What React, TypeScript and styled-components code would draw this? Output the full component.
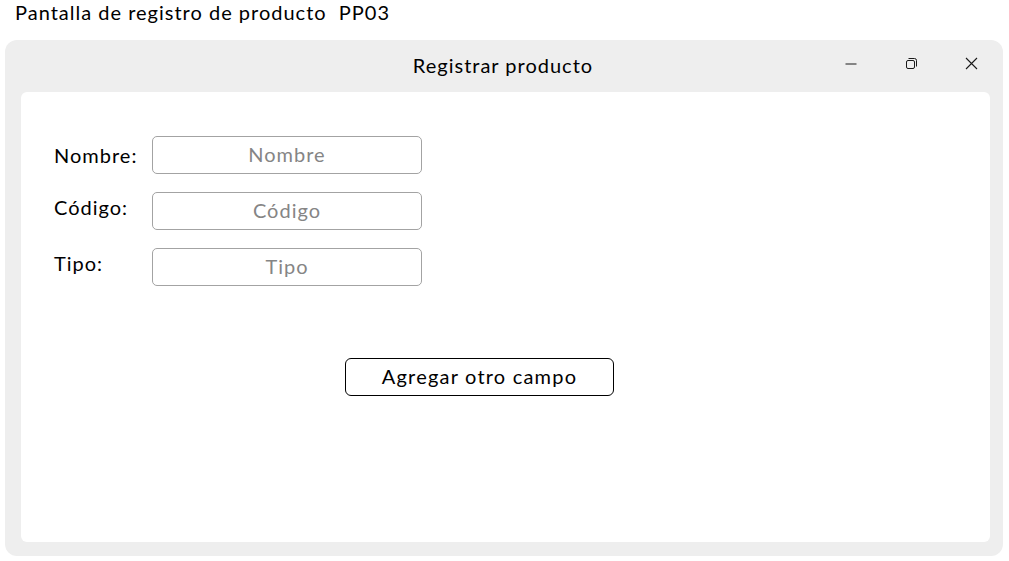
import styled, { createGlobalStyle } from 'styled-components';

const GlobalStyle = createGlobalStyle`
  html, body {
    margin: 0;
    padding: 0;
    background: #ffffff;
  }
  body {
    font-family: Lato, "Open Sans", sans-serif;
    color: #000000;
    letter-spacing: 1px;
  }
`;

const Page = styled.div`
  width: 1009px;
  height: 561px;
  padding: 0 6px 0 5px;
  box-sizing: border-box;
`;

const Caption = styled.div`
  height: 40px;
  box-sizing: border-box;
  padding: 2px 0 0 10px;
  font-size: 20px;
  line-height: 20px;
`;

const Window = styled.div`
  height: 516px;
  border-radius: 12px;
  background-color: #eeeeee;
  display: flex;
  flex-direction: column;
`;

const TitleBar = styled.div`
  height: 52px;
  display: grid;
  grid-template-columns: 1fr auto 1fr;
  align-items: center;
  padding-right: 2px;
`;

const Title = styled.div`
  grid-column: 2;
  font-size: 20px;
  padding-bottom: 3px;
`;

const Controls = styled.div`
  grid-column: 3;
  justify-self: end;
  display: flex;
  align-self: stretch;
`;

const ControlButton = styled.button`
  width: 60px;
  border: none;
  background: transparent;
  display: flex;
  align-items: center;
  justify-content: center;
  padding: 0 0 5px 0;
  color: #1a1a1a;
`;

const Panel = styled.div`
  flex: 1;
  margin: 0 13px 14px 16px;
  background: #ffffff;
  border-radius: 6px;
  padding: 44px 0 0 33px;
`;

const Form = styled.div`
  display: grid;
  grid-template-columns: 98px 270px;
  row-gap: 18px;
  align-items: center;
`;

const Label = styled.label<{ $lift?: number }>`
  font-size: 20px;
  margin-top: ${(p) => -(p.$lift ?? 0)}px;
`;

const Field = styled.input`
  height: 38px;
  box-sizing: border-box;
  border: 1px solid #a3a3a3;
  border-radius: 5px;
  font-family: inherit;
  letter-spacing: 1px;
  font-size: 20px;
  text-align: center;
  padding: 0 0 2px 0;
  &::placeholder {
    color: #858585;
  }
`;

const Actions = styled.div`
  margin: 72px 0 0 291px;
`;

const AddButton = styled.button`
  width: 269px;
  height: 38px;
  border: 1px solid #000000;
  border-radius: 6px;
  background: #ffffff;
  font-family: inherit;
  letter-spacing: 1.2px;
  font-size: 20px;
  color: #000000;
  padding: 0 0 3px 0;
`;

const fields = [
  { label: 'Nombre:', lift: 1 },
  { label: 'Código:', lift: 9 },
  { label: 'Tipo:', lift: 8 },
];

function App() {
  return (
    <Page>
      <GlobalStyle />
      <Caption>Pantalla de registro de producto&nbsp; PP03</Caption>
      <Window>
        <TitleBar>
          <Title>Registrar producto</Title>
          <Controls>
            <ControlButton aria-label="Minimizar">
              <svg width="12" height="12" viewBox="0 0 12 12">
                <path d="M0.5 6h11" stroke="currentColor" strokeWidth="1" />
              </svg>
            </ControlButton>
            <ControlButton aria-label="Restaurar">
              <svg width="13" height="13" viewBox="0 0 13 13" fill="none">
                <rect x="1.5" y="3.5" width="8" height="8" rx="1.5" stroke="currentColor" />
                <path d="M3.5 1.5h6a2 2 0 0 1 2 2v6" stroke="currentColor" />
              </svg>
            </ControlButton>
            <ControlButton aria-label="Cerrar">
              <svg width="13" height="13" viewBox="0 0 13 13">
                <path d="M1 1l11 11M12 1L1 12" stroke="currentColor" strokeWidth="1.1" />
              </svg>
            </ControlButton>
          </Controls>
        </TitleBar>
        <Panel>
          <Form>
            {fields.map((f) => (
              <>
                <Label key={f.label + 'l'} $lift={f.lift}>{f.label}</Label>
                <Field key={f.label + 'i'} placeholder={f.label.replace(':', '')} />
              </>
            ))}
          </Form>
          <Actions>
            <AddButton>Agregar otro campo</AddButton>
          </Actions>
        </Panel>
      </Window>
    </Page>
  );
}

export default App;
